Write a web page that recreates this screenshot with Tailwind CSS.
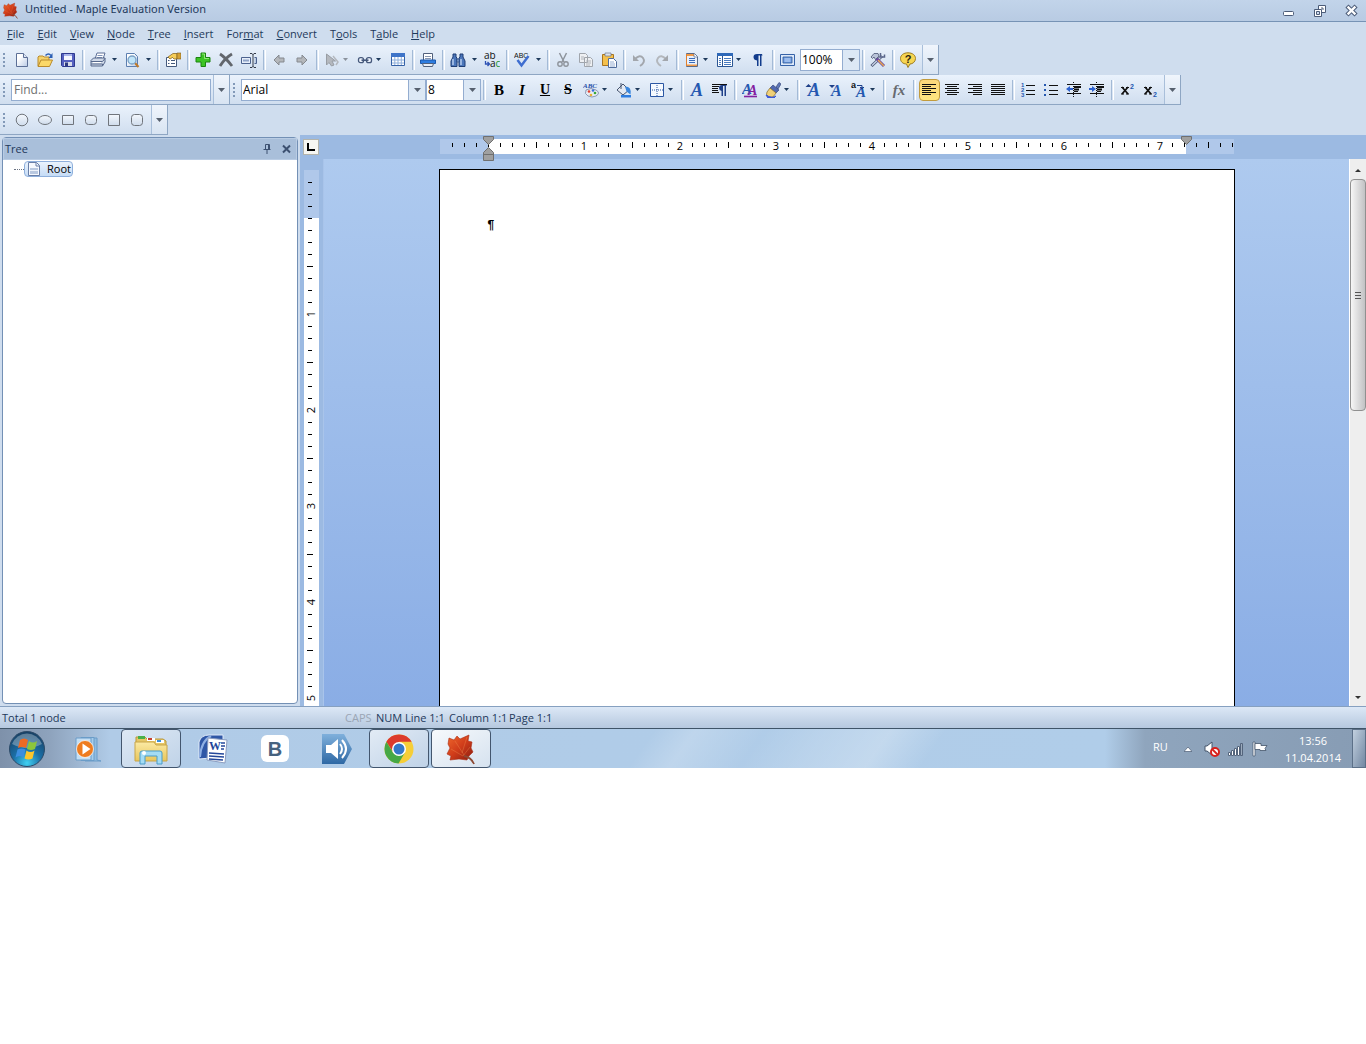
<!DOCTYPE html>
<html lang="en">

<head>
    <meta charset="utf-8">
    <title>Untitled - Maple Evaluation Version</title>
    <script src="https://cdn.jsdelivr.net/npm/@tailwindcss/browser@4"></script>
</head>

<body class="bg-white font-['Open_Sans',sans-serif] text-[11px] leading-4 text-[#1e395b]">
    <!-- gradients need a rendered svg, display:none would drop them -->
    <svg class="absolute size-0" aria-hidden="true">
        <defs>
            <linearGradient id="g-leaf" x1="0" y1="0" x2="1" y2="1"><stop offset="0" stop-color="#f0682c"/><stop offset=".5" stop-color="#d03c1a"/><stop offset="1" stop-color="#8c1c10"/></linearGradient>
            <linearGradient id="g-paper" x1="0" y1="0" x2="1" y2="1"><stop offset=".3" stop-color="#fff"/><stop offset="1" stop-color="#b9cae6"/></linearGradient>
            <linearGradient id="g-shape" x1="0" y1="0" x2="0" y2="1"><stop offset="0" stop-color="#f4f8fd"/><stop offset="1" stop-color="#cfdcec"/></linearGradient>
            <radialGradient id="g-orb" cx=".5" cy=".9" r=".9"><stop offset="0" stop-color="#3fd0f2"/><stop offset=".45" stop-color="#1b6fa6"/><stop offset="1" stop-color="#173f63"/></radialGradient>
            <linearGradient id="g-blue" x1="0" y1="0" x2="0" y2="1"><stop offset="0" stop-color="#7fb0dc"/><stop offset="1" stop-color="#2e68a4"/></linearGradient>
            <linearGradient id="g-folder" x1="0" y1="0" x2="0" y2="1"><stop offset="0" stop-color="#fbeaa4"/><stop offset="1" stop-color="#e8c65c"/></linearGradient>
        </defs>
    </svg>
    <!-- icon set -->
    <svg class="hidden" aria-hidden="true">
        <symbol id="i-leaf" viewBox="0 0 32 32"><path d="M4 5l5 2 3-4 3 3 9-4-1 6 4 1-1 6 2 4-4 4-2 4-8-1-9 1 1-4-4-2 3-6-2-4z" fill="url(#g-leaf)" stroke="#a82c14" stroke-width=".6"/><path d="M10 8l9 14M22 4l-5 16M6 16l12 7M25 14l-7 9" stroke="#f79a58" stroke-width=".8" fill="none" opacity=".4"/><path d="M19 23q7 1 10 8" stroke="#8d4a34" stroke-width="1.800" fill="none"/></symbol>
        <symbol id="i-new" viewBox="0 0 16 16"><path d="M2.500 1.500h7l4 4v9h-11z" fill="url(#g-paper)" stroke="#5c6f96"/><path d="M9.500 1.500v4h4" fill="#dfe8f6" stroke="#5c6f96"/></symbol>
        <symbol id="i-open" viewBox="0 0 16 16"><path d="M1 14V5l1-1h4l1 1h5v3" fill="#f4d26a" stroke="#b98a2c"/><path d="M1 14.500L4 8h11.500l-3 6.500z" fill="#fbd868" stroke="#b98a2c"/><path d="M8.500 3.500q3-3 5.500 0" fill="none" stroke="#2b5fb4" stroke-width="1.500"/><path d="M15.500 1v5h-4z" fill="#2b5fb4"/></symbol>
        <symbol id="i-save" viewBox="0 0 16 16"><path d="M1.500 1.500h13v13h-12l-1-1z" fill="#5560c0" stroke="#2e3a90"/><path d="M4 2h8v6H4z" fill="#f5f7ff"/><path d="M4 2h8v2H4z" fill="#aab6ea"/><path d="M4 10h8v4H4z" fill="#d8dcea"/><path d="M5 10.500h3V14H5z" fill="#2e3a80"/></symbol>
        <symbol id="i-print" viewBox="0 0 16 16"><path d="M5 7l2-6h8l-2 6" fill="#fff" stroke="#5c6f96"/><path d="M7.500 3.500h5M7 5.500h5" stroke="#7f93b8"/><path d="M1 8.500L3.500 6H15v4l-2.500 4H1z" fill="#cfd9e8" stroke="#56688c"/><path d="M1 9.500h11.500L15 6.500M1 12h11.500v2" fill="none" stroke="#56688c"/><path d="M3 10.500h8" stroke="#fff"/></symbol>
        <symbol id="i-preview" viewBox="0 0 16 16"><path d="M2.500 1.500h8l3 3v10h-11z" fill="url(#g-paper)" stroke="#5c7fb0"/><path d="M11 11l3.500 4" stroke="#c07a28" stroke-width="2"/><circle cx="8" cy="8" r="4" fill="#bfe4f8" stroke="#7aa0c4" stroke-width="1.300"/></symbol>
        <symbol id="i-props" viewBox="0 0 16 16"><path d="M1.500 5.500h10v9h-10z" fill="#fff" stroke="#44597c"/><path d="M3 8.500h1.500M6 8.500h4M3 11.500h1.500M6 11.500h4" stroke="#44597c"/><path d="M3 5l5-3.500h4V7H9L7.500 5.500 5 7z" fill="#f6cd58" stroke="#8a6a28" stroke-width=".8"/><path d="M12 1h4v6h-4z" fill="#d6a234" stroke="#7a5a20" stroke-width=".6"/></symbol>
        <symbol id="i-plus" viewBox="0 0 16 16"><path d="M6 1h4.500v4.500H15V10h-4.500v4.500H6V10H1V5.500h5z" fill="#3cc424" stroke="#1b8410"/><path d="M7 2h2.500v4.500H14" fill="none" stroke="#a6f08c" stroke-width=".8"/></symbol>
        <symbol id="i-x" viewBox="0 0 16 16"><path d="M2 2q6 4 12 12M14 2Q7 6 2 14" stroke="#62666c" stroke-width="2.800" fill="none"/></symbol>
        <symbol id="i-rename" viewBox="0 0 16 16"><path d="M.5 5.500h9v6h-9z" fill="#e6eefa" stroke="#4c628e"/><path d="M2 8.500h6" stroke="#90a4c8" stroke-width="2"/><path d="M9 1.500h2l1 1 1-1h2M9 15.500h2l1-1 1 1h2M12 2v13" fill="none" stroke="#333a48"/><path d="M13.500 5.500h2v6h-2" fill="#b8c8e0" stroke="#4c628e"/></symbol>
        <symbol id="i-left" viewBox="0 0 16 16"><path d="M8 3v3h5v4H8v3L3 8z" fill="#b4b7bb" stroke="#85898f"/></symbol>
        <symbol id="i-right" viewBox="0 0 16 16"><path d="M8 3v3H3v4h5v3l5-5z" fill="#b4b7bb" stroke="#85898f"/></symbol>
        <symbol id="i-cursor" viewBox="0 0 16 16"><path d="M2.500 2v11l2.500-2.500L7.500 14 10 13 8 9h3.500z" fill="#b4b8be" stroke="#989da4"/><path d="M9 4l5 6-2 3" fill="none" stroke="#b4b8be" stroke-width="1.500"/></symbol>
        <symbol id="i-link" viewBox="0 0 16 16"><rect x="1.500" y="5.700" width="5" height="5" rx="2" fill="#eef4fc" stroke="#46597c" stroke-width="1.300"/><rect x="9.500" y="5.700" width="5" height="5" rx="2" fill="#eef4fc" stroke="#46597c" stroke-width="1.300"/><path d="M4.500 8.200h7" stroke="#46597c" stroke-width="1.600"/></symbol>
        <symbol id="i-table" viewBox="0 0 16 16"><path d="M1.500 1.500h13v12h-13z" fill="#fff" stroke="#3562a8"/><path d="M1 1h14v4H1z" fill="#3e74c8"/><path d="M2 8h12M2 11h12M4.800 5v8M8 5v8M11.300 5v8" stroke="#8fb0dc"/></symbol>
        <symbol id="i-print2" viewBox="0 0 16 16"><path d="M3.500 8V1.500h9V8" fill="#fff" stroke="#50607c"/><path d="M5 4.500h6M5 6.500h6" stroke="#8896b0"/><path d="M.5 8h15v3.500H.5z" fill="#2e7de0" stroke="#1c58ac"/><path d="M2.500 11.500h11l-1 3h-9z" fill="#e9eef6" stroke="#50607c"/></symbol>
        <symbol id="i-binoc" viewBox="0 0 16 16"><path d="M3 2h3v3l1 1v8.500H1V9l2-4zM13 2h-3v3L9 6v8.500h6V9l-2-4z" fill="#4b76ba" stroke="#1f3d74"/><path d="M7 7h2v3H7z" fill="#8eaedc" stroke="#1f3d74" stroke-width=".6"/><path d="M3 7v6M11 7v6" stroke="#c4d8f4" stroke-width="1.300"/></symbol>
        <symbol id="i-replace" viewBox="0 0 16 16"><g font-family="Open Sans" font-size="10"><text x="0" y="7" fill="#111">ab</text><text x="6" y="15" fill="#111">a<tspan fill="#18922c">c</tspan></text></g><path d="M1.500 9v3h4M3.500 10l2 2-2 2" fill="none" stroke="#2c50b4" stroke-width="1.300"/></symbol>
        <symbol id="i-spell" viewBox="0 0 16 16"><text x="0" y="6" font-family="Liberation Sans" font-size="7" fill="#111">ABC</text><path d="M3.500 8l4 5.500L14.500 4" fill="none" stroke="#3f6ed0" stroke-width="2.500"/></symbol>
        <symbol id="i-cut" viewBox="0 0 16 16"><path d="M4.500 1l4.500 9M11.500 1L7 10" stroke="#8e949c" stroke-width="1.500"/><circle cx="5" cy="12" r="2.200" fill="none" stroke="#8e949c" stroke-width="1.400"/><circle cx="11" cy="12" r="2.200" fill="none" stroke="#8e949c" stroke-width="1.400"/></symbol>
        <symbol id="i-copy" viewBox="0 0 16 16"><path d="M1.500 1.500h6l2 2v7h-8zM6.500 5.500h6l2 2v7h-8z" fill="#eef0f3" stroke="#a0a5ac"/><path d="M3 5h3M3 7h3M8 9h5M8 11h5M8 13h4" stroke="#b0b4ba"/></symbol>
        <symbol id="i-paste" viewBox="0 0 16 16"><path d="M1.500 2.500h11v11h-11z" fill="#f4c04c" stroke="#a87420"/><path d="M4 1h6v3H4z" fill="#dfe4ec" stroke="#6c7890" stroke-width=".7"/><path d="M7.500 6.500h5l3 3v6h-8z" fill="#fff" stroke="#506c9c"/><path d="M9 10h4M9 12h5M9 14h5" stroke="#7b9ac8" stroke-width=".8"/></symbol>
        <symbol id="i-undo" viewBox="0 0 16 16"><path d="M4 7q5-5 8-1t-3 8" fill="none" stroke="#a3a7ad" stroke-width="2"/><path d="M2 3v6h6z" fill="#a3a7ad"/></symbol>
        <symbol id="i-redo" viewBox="0 0 16 16"><path d="M12 7Q7 2 4 6t3 8" fill="none" stroke="#b3b7bc" stroke-width="2"/><path d="M14 3v6H8z" fill="#a3a7ad"/></symbol>
        <symbol id="i-doc" viewBox="0 0 16 16"><path d="M2.500 1.500h8l3 3v10h-11z" fill="#e8f0fc" stroke="#5a6a88"/><path d="M3 2h7v2H3zM3 12.500h10V14H3z" fill="#f09a48"/><path d="M2.500 2v12" stroke="#e08030"/><path d="M5 6.500h6M5 8.500h6M5 10.500h6" stroke="#3c6cb8"/><path d="M10 1.500v3.500h3.500" fill="#fff" stroke="#5a6a88" stroke-width=".7"/></symbol>
        <symbol id="i-cols" viewBox="0 0 16 16"><path d="M.5 1.500h15v13H.5z" fill="#fff" stroke="#2b5694"/><path d="M0 1h16v3H0z" fill="#2f69b8"/><path d="M5.500 4v10" stroke="#2b5694"/><path d="M2 6.500h2M2 8.500h2M2 10.500h2M2 12.500h2M7 6.500h7M7 8.500h7M7 10.500h7M7 12.500h7" stroke="#4a7cc0"/></symbol>
        <symbol id="i-pil" viewBox="0 0 16 16"><path d="M12 2H7Q3.500 2 3.500 5T7 8.500v5.500h1.500V3.500h1.500V14h1.500V3.500h1z" fill="#123c8c"/></symbol>
        <symbol id="i-fit" viewBox="0 0 16 16"><path d="M.5 2.500h14v11H.5z" fill="#dbe8fa" stroke="#3562a8"/><path d="M3 5h9v6H3z" fill="#6c9ae0" stroke="#2b5694" stroke-width=".8"/><path d="M4.500 7h6M4.500 9h6" stroke="#c8dcf8"/></symbol>
        <symbol id="i-tools" viewBox="0 0 16 16"><path d="M1.500 14L12 4" stroke="#4a5674" stroke-width="3"/><path d="M2 13.500L12 4" stroke="#cad4e8" stroke-width="1.300"/><path d="M10.500 1v4h4V2.500" fill="none" stroke="#5a668a" stroke-width="1.500"/><path d="M6 6l8 8" stroke="#6a48a0" stroke-width="3"/><path d="M8 8l6 6" stroke="#e8a850" stroke-width="1.500"/><path d="M1 5l3-3.500h4L9 4 5.500 7.500 4 5 2.500 6.500z" fill="#b9c3d8" stroke="#4a5674" stroke-width=".8"/></symbol>
        <symbol id="i-help" viewBox="0 0 16 16"><path d="M8 .8c4.500 0 7.500 2.400 7.500 5.700S12.500 12 10 12l-2 3.500L6.500 12C3 12 .5 9.800.5 6.500S3.500.8 8 .8z" fill="#f6d552" stroke="#9c7c24"/><text x="8" y="10.500" text-anchor="middle" font-family="Liberation Sans" font-weight="bold" font-size="11" fill="#2a2410">?</text></symbol>
        <symbol id="i-abc" viewBox="0 0 16 16"><text x="0" y="6" font-family="Liberation Serif" font-weight="bold" font-style="italic" font-size="7" fill="#2750a8">ABC</text><path d="M3 8q5-3 10 0t0 6q-4 2-8 0t-2-6z" fill="#e8ecf4" stroke="#7484a4" stroke-width=".8"/><circle cx="6" cy="9.500" r="1.300" fill="#e04030"/><circle cx="10" cy="8.500" r="1.300" fill="#3a70d8"/><circle cx="12" cy="11" r="1.300" fill="#38a838"/><circle cx="8" cy="13" r="1.300" fill="#e8b030"/></symbol>
        <symbol id="i-fill" viewBox="0 0 16 16"><path d="M1 8l6-6 6 6-6 5z" fill="#e4eaf4" stroke="#46546e"/><path d="M5 1v6" stroke="#46546e"/><path d="M9 4.500q7 0 5.500 8l-4-3z" fill="#3a86dc"/><path d="M5 13h10v2.500H5z" fill="#2e7de0"/></symbol>
        <symbol id="i-border" viewBox="0 0 16 16"><path d="M1.500 1.500h13v13h-13z" fill="#f6faff" stroke="#2b57a4"/><path d="M8 3v11M3 8h11" stroke="#2b57a4" stroke-dasharray="1 1"/></symbol>
        <symbol id="i-A" viewBox="0 0 16 16"><text x="2" y="14" font-family="Liberation Serif" font-style="italic" font-weight="bold" font-size="18" fill="#2558b0">A</text></symbol>
        <symbol id="i-para" viewBox="0 0 16 16"><path d="M0 2.500h15M0 4.500h7M0 6.500h6M0 8.500h6M0 10.500h7" stroke="#111"/><path d="M14.500 3H10q-3 0-3 2.800T9.500 9v5H11V4h1.500v10H14V4h.5z" fill="#1e3f88"/></symbol>
        <symbol id="i-AA" viewBox="0 0 16 16"><g font-family="Liberation Serif" font-style="italic" font-weight="bold"><text x="0" y="12" font-size="15" fill="#2558b0">A</text><text x="6" y="13" font-size="14" fill="#8420a0">A</text></g><path d="M2 14.500h13" stroke="#8420a0" stroke-width="1.600"/></symbol>
        <symbol id="i-brush" viewBox="0 0 16 16"><path d="M11 5l3-4.500 2 1.500L13 7z" fill="#6078b8" stroke="#36477c" stroke-width=".7"/><path d="M8 3l6 5-3 3-6-5z" fill="#5068b0" stroke="#36477c" stroke-width=".7"/><path d="M5 6l6 5-3 4H4q-4-2-2-5z" fill="#f0d078" stroke="#826828" stroke-width=".7"/><path d="M1 13q6 4 10 1l-2 2H3z" fill="#3a58d8" stroke="#3a58d8"/></symbol>
        <symbol id="i-grow" viewBox="0 0 16 16"><text x="3" y="14" font-family="Liberation Serif" font-style="italic" font-weight="bold" font-size="18" fill="#2558b0">A</text><path d="M.5 5h6L3.500 2z" fill="#1d3f88"/></symbol>
        <symbol id="i-shrink" viewBox="0 0 16 16"><text x="3" y="14" font-family="Liberation Serif" font-style="italic" font-weight="bold" font-size="16" fill="#2558b0">A</text><path d="M1 3h6L4 6z" fill="#1d3f88"/></symbol>
        <symbol id="i-case" viewBox="0 0 16 16"><text x="0" y="6" font-family="Liberation Sans" font-weight="bold" font-size="9" fill="#111">a</text><text x="5" y="15" font-family="Liberation Serif" font-style="italic" font-weight="bold" font-size="15" fill="#2558b0">A</text><path d="M6 3.500h5v3M9 5l2 2 2-2" fill="none" stroke="#1d3f88"/></symbol>
        <symbol id="i-al" viewBox="0 0 16 16"><path d="M1 2.500h14M1 4.500h9M1 6.500h14M1 8.500h9M1 10.500h14M1 12.500h9" stroke="#111"/></symbol>
        <symbol id="i-ac" viewBox="0 0 16 16"><path d="M1 2.500h14M3 4.500h10M1 6.500h14M3 8.500h10M1 10.500h14M3 12.500h10" stroke="#111"/></symbol>
        <symbol id="i-ar" viewBox="0 0 16 16"><path d="M1 2.500h14M6 4.500h9M1 6.500h14M6 8.500h9M1 10.500h14M6 12.500h9" stroke="#111"/></symbol>
        <symbol id="i-aj" viewBox="0 0 16 16"><path d="M1 2.500h14M1 4.500h14M1 6.500h14M1 8.500h14M1 10.500h14M1 12.500h14" stroke="#111"/></symbol>
        <symbol id="i-num" viewBox="0 0 16 16"><path d="M6 3.500h9M6 8.500h9M6 12.500h9" stroke="#111"/><g font-family="Liberation Sans" font-weight="bold" font-size="6" fill="#2558b0"><text x="1" y="5">1</text><text x="1" y="10">2</text><text x="1" y="15">3</text></g></symbol>
        <symbol id="i-bul" viewBox="0 0 16 16"><path d="M6 3.500h9M6 8.500h9M6 12.500h9" stroke="#111"/><path d="M1 2h2v2H1zM1 7h2v2H1zM1 12h2v2H1z" fill="#2558b0"/></symbol>
        <symbol id="i-out" viewBox="0 0 16 16"><path d="M1 2.500h14M8 9.500h4M1 11.500h14" stroke="#111"/><path d="M8 5h7M8 7.500h5" stroke="#111" stroke-width="2"/><path d="M7.500 0v15" stroke="#111" stroke-dasharray="1 1"/><path d="M0 7l4-3v2h3v2H4v2z" fill="#2e62d0"/></symbol>
        <symbol id="i-in" viewBox="0 0 16 16"><path d="M1 2.500h14M8 9.500h4M1 11.500h14" stroke="#111"/><path d="M8 5h7M8 7.500h5" stroke="#111" stroke-width="2"/><path d="M7.500 0v15" stroke="#111" stroke-dasharray="1 1"/><path d="M7 7L3 4v2H0v2h3v2z" fill="#2e62d0"/></symbol>
        <symbol id="i-sup" viewBox="0 0 16 16"><path d="M3 5l6 7M9 5l-6 7" stroke="#111" stroke-width="1.800"/><path d="M2 5.500h3M7 5.500h3M2 12h3M7 12h3" stroke="#111"/><text x="11" y="7" font-family="Liberation Sans" font-weight="bold" font-size="7" fill="#2558b0">2</text></symbol>
        <symbol id="i-sub" viewBox="0 0 16 16"><path d="M3 5l6 7M9 5l-6 7" stroke="#111" stroke-width="1.800"/><path d="M2 5.500h3M7 5.500h3M2 12h3M7 12h3" stroke="#111"/><text x="11" y="15" font-family="Liberation Sans" font-weight="bold" font-size="7" fill="#2558b0">2</text></symbol>
        <symbol id="i-circle" viewBox="0 0 16 16"><circle cx="8" cy="8" r="5.800" fill="url(#g-shape)" stroke="#70757c"/></symbol>
        <symbol id="i-ellipse" viewBox="0 0 16 16"><ellipse cx="8" cy="8" rx="6.500" ry="4.500" fill="url(#g-shape)" stroke="#70757c"/></symbol>
        <symbol id="i-rect" viewBox="0 0 16 16"><path d="M2.500 3.500h11v9h-11z" fill="url(#g-shape)" stroke="#70757c"/></symbol>
        <symbol id="i-rrect" viewBox="0 0 16 16"><rect x="2.500" y="3.500" width="11" height="9" rx="3" fill="url(#g-shape)" stroke="#70757c"/></symbol>
        <symbol id="i-square" viewBox="0 0 16 16"><path d="M2.500 2.500h11v11h-11z" fill="url(#g-shape)" stroke="#70757c"/></symbol>
        <symbol id="i-rsquare" viewBox="0 0 16 16"><rect x="2.500" y="2.500" width="11" height="11" rx="3" fill="url(#g-shape)" stroke="#70757c"/></symbol>
    </svg>

    <!-- application window -->
    <div class="bg-[#cfddee]">
        <header class="flex h-[22px] items-center border-b border-[#7793b5] bg-gradient-to-b from-[#c2d4ea] to-[#b8cbe3] pl-0.5 pr-[7px] font-['Noto_Sans',sans-serif]">
            <svg class="mr-1.5 size-[17px]"><use href="#i-leaf"/></svg>
            <h1 class="mb-1">Untitled - Maple Evaluation Version</h1>
            <div class="ml-auto flex items-center gap-[18px]">
                <button aria-label="Minimize"><svg class="block h-3.5 w-3.5" viewBox="0 0 14 14"><rect x="2.500" y="7.500" width="10" height="4" rx="1" fill="#fff" stroke="#4c5c78"/></svg></button>
                <button aria-label="Restore"><svg class="block h-3.5 w-3.5" viewBox="0 0 14 14"><path d="M5.500 1.500h7v7h-7z" fill="#fff" stroke="#4c5c78"/><path d="M8 4h2v2" fill="none" stroke="#4c5c78"/><path d="M1.500 5.500h7v7h-7z" fill="#fff" stroke="#4c5c78"/><path d="M3.500 7.500h3v3h-3z" fill="#cfdcf0" stroke="#4c5c78"/></svg></button>
                <button aria-label="Close"><svg class="block h-3.5 w-3.5" viewBox="0 0 14 14"><path d="M3.500 3.500l6 6M9.500 3.500l-6 6" stroke="#4c5c78" stroke-width="4.400" stroke-linecap="square"/><path d="M3.500 3.500l6 6M9.500 3.500l-6 6" stroke="#fff" stroke-width="2.400" stroke-linecap="square"/></svg></button>
            </div>
        </header>

        <nav class="flex h-[23px] items-center gap-[13px] pl-[7px]">
            <button><u>F</u>ile</button>
            <button><u>E</u>dit</button>
            <button><u>V</u>iew</button>
            <button><u>N</u>ode</button>
            <button><u>T</u>ree</button>
            <button><u>I</u>nsert</button>
            <button>For<u>m</u>at</button>
            <button><u>C</u>onvert</button>
            <button>T<u>o</u>ols</button>
            <button>T<u>a</u>ble</button>
            <button><u>H</u>elp</button>
        </nav>

        <div class="flex h-[30px]">
            <div data-bar="standard" class="flex items-center border-b border-r border-[#8ea6c3] bg-gradient-to-b from-[#eaf2fc] to-[#d0deef]"></div>
        </div>
        <div class="flex h-[30px]">
            <div data-bar="find" class="flex items-center border-b border-r border-[#8ea6c3] bg-gradient-to-b from-[#eaf2fc] to-[#d0deef]"></div>
            <div data-bar="format" class="flex items-center border-b border-r border-[#8ea6c3] bg-gradient-to-b from-[#eaf2fc] to-[#d0deef]"></div>
        </div>
        <div class="flex h-[30px]">
            <div data-bar="shapes" class="flex items-center border-b border-r border-[#8ea6c3] bg-gradient-to-b from-[#eaf2fc] to-[#d0deef]"></div>
        </div>

        <main class="flex">
            <div class="flex w-[300px] shrink-0 p-0.5">
                <section class="flex flex-1 flex-col rounded-sm border border-[#7390b5] bg-white">
                    <h2 class="flex h-[22px] items-center border border-[#b9cce4] bg-[#a9bfda] pl-px pr-[3px]">Tree
                        <button class="ml-auto mr-[7px]" aria-label="Pin"><svg class="block size-3" viewBox="0 0 12 12"><path d="M3.500 1.500h4v5h-4zM1.500 6.500h7M5 7v4M6.500 2v4" fill="none" stroke="#3c5070"/></svg></button>
                        <button aria-label="Close tree"><svg class="block size-3" viewBox="0 0 12 12"><path d="M2 2.500l7 7M9 2.500l-7 7" stroke="#3c5070" stroke-width="2"/></svg></button>
                    </h2>
                    <div class="mt-px flex items-center pl-[11px]">
                        <span class="w-2.5 border-t border-dotted border-gray-500"></span>
                        <button class="flex h-4 items-center gap-1.5 rounded-sm border border-[#8fb0dc] bg-gradient-to-b from-[#eaf3fd] to-[#c6dcf6] pl-0.5 pr-px text-black">
                            <svg class="size-3.5" viewBox="0 0 14 14"><path d="M1.500.5h8l3 3v10h-11z" fill="#f6f9fe" stroke="#6a7fa8"/><path d="M9 .5v3.500h3.500" fill="none" stroke="#6a7fa8"/><path d="M3 6h8v6H3z" fill="#b9c8e0"/><path d="M3 8.500h8" stroke="#eef3fa"/></svg>
                            Root
                        </button>
                    </div>
                </section>
            </div>

            <div class="grid flex-1 grid-cols-[24px_1fr_17px] grid-rows-[24px_1fr] bg-[#9cbae2]">
                <button class="mt-1 ml-[3px] size-4 border border-[#b4b4ac] bg-[#f6f6f2]" aria-label="Tab stop"><svg class="block size-3.5" viewBox="0 0 14 14"><path d="M4 3v7h7" fill="none" stroke="#000" stroke-width="2"/></svg></button>
                <div class="relative z-10 flex justify-center">
                    <svg id="hruler" class="block h-6 w-[796px] shrink-0 overflow-visible"></svg>
                </div>
                <div></div>

                <div class="border-r border-[#a9c4ea] pl-1 pt-[11px]">
                    <svg id="vruler" class="block h-[536px] w-[15px]"></svg>
                </div>
                <div class="flex justify-center bg-gradient-to-b from-[#aecaef] to-[#8aade5] pt-2.5">
                    <article class="min-h-[537px] w-[796px] border border-b-0 border-black bg-white px-12 pt-[47px] font-['Liberation_Sans'] text-[12px] font-bold text-black" contenteditable="true" spellcheck="false">¶</article>
                </div>
                <div class="flex flex-col border-l border-white bg-[#eeeeee] pt-0.5">
                    <svg class="h-[18px] w-4 shrink-0" viewBox="0 0 16 18"><path d="M5 11h6L8 8z" fill="#333"/></svg>
                    <div class="flex h-[232px] items-center justify-center rounded-sm border border-[#909090] bg-gradient-to-r from-[#f6f6f6] to-[#c2c2c4]">
                        <svg class="h-2 w-2" viewBox="0 0 8 8"><path d="M1 1.500h6M1 4.500h6M1 7.500h6" stroke="#555"/></svg>
                    </div>
                    <svg class="mt-auto h-[18px] w-4 shrink-0" viewBox="0 0 16 18"><path d="M5 8h6l-3 3z" fill="#333"/></svg>
                </div>
            </div>
        </main>

        <footer class="flex h-[22px] items-center border-t border-[#86a0c0] bg-gradient-to-b from-[#dce8f6] to-[#b6c8df] pl-0.5">
            <span class="w-[343px]">Total 1 node</span>
            <span class="w-[31px] text-[#9aa5b4]">CAPS</span>
            <span class="w-[29px]">NUM</span>
            <span class="w-11">Line 1:1</span>
            <span class="w-[60px]">Column 1:1</span>
            <span>Page 1:1</span>
        </footer>
    </div>

    <!-- taskbar -->
    <div class="flex h-10 items-stretch border-t border-[#3f5468] bg-[linear-gradient(125deg,transparent_47%,#ffffff30_50%,transparent_55%,#ffffff20_59%,#ffffff40_64%,transparent_68%),linear-gradient(90deg,#7e91aa_0,#8ea3bd_50px,#b0cbe7_110px,#b0cde9_1105px,#8fa5bd_1145px,#879cb4_100%)]">
        <button class="flex w-[57px] items-center justify-center pr-1" aria-label="Start">
            <svg class="size-[38px]" viewBox="0 0 38 38"><circle cx="19" cy="19" r="17.500" fill="url(#g-orb)" stroke="#2c4a68"/><path d="M4 14a16 16 0 0 1 30 0q-15 8-30 0z" fill="#fff" opacity=".3"/><path d="M12 10q4-3 8 0l-2 8q-4-2-8 0z" fill="#ee6a24"/><path d="M21 11q4 3 8 0l-2 8q-4 2-8 0z" fill="#8cc63c"/><path d="M9.500 19.500q4-2 8 0l-2 8q-4-3-8 0z" fill="#3c8ee0"/><path d="M18.500 20.500q4 3 8 0l-2 8q-4 2-8 0z" fill="#fcc62c"/></svg>
        </button>
        <div class="flex gap-0.5 pl-0.5">
            <button class="flex w-[60px] items-center justify-center" aria-label="Media Player">
                <svg class="size-8" viewBox="0 0 32 32"><path d="M12 5h12v22l4 1H12z" fill="#8fbbe0" stroke="#6a9cc8"/><path d="M8 4.500h13v23H8z" fill="#a6cdec" stroke="#6a9cc8"/><path d="M3 5h15v22H3z" fill="#c4dff4" stroke="#6a9cc8"/><circle cx="12" cy="16" r="8.500" fill="#ee7c20" stroke="#fff" stroke-width=".7"/><path d="M9.500 10.500l8 5.500-8 5.500z" fill="#fff"/></svg>
            </button>
            <button class="flex w-[60px] items-center justify-center rounded-sm border border-[#43566e] bg-gradient-to-br from-[#dde8f4] to-[#c0d3e8]" aria-label="Explorer">
                <svg class="h-8 w-9" viewBox="0 0 36 32"><path d="M3 4h9l2 2h16l3 2v18H3z" fill="#e6c766" stroke="#b9983c"/><path d="M5 3h7v3H5z" fill="#48b048"/><path d="M14 5h8v3h-8z" fill="#fff"/><path d="M15 5h4v2h-4z" fill="#c84030"/><path d="M23 7h8v3h-8z" fill="#fff"/><path d="M24 7h4v2h-4z" fill="#3a90d8"/><path d="M2 9h19l2 3h11v16H2z" fill="url(#g-folder)" stroke="#c8a548"/><path d="M7 31V20q0-2 2-2h18q2 0 2 2v11h-5v-8H12v8z" fill="#a4dcf4" stroke="#4a9cc8"/><circle cx="11" cy="20" r="2" fill="#fff"/></svg>
            </button>
            <button class="flex w-[60px] items-center justify-center" aria-label="Word">
                <svg class="size-8" viewBox="0 0 32 32"><path d="M2 26V9Q4 2 12 2h14v22z" fill="#2f57a6" stroke="#dfe9f8"/><path d="M3 24Q4 8 14 3" stroke="#8fb0e4" stroke-width="2" fill="none"/><path d="M11 5l19 2-2 23-18-3z" fill="#fff" stroke="#8a9cc0"/><text x="12" y="17" font-family="Liberation Serif" font-size="12" font-weight="bold" fill="#24479a">W</text><path d="M24 10h4M24 13h4M24 16h3M12 20l15 1M12 23l15 1M12 26l14 1" stroke="#24479a" stroke-width="1.500"/></svg>
            </button>
            <button class="flex w-[60px] items-center justify-center" aria-label="VK">
                <span class="flex h-[27px] w-7 items-center justify-center rounded-md bg-white font-['Liberation_Sans'] text-[20px] font-bold text-[#46627f]">B</span>
            </button>
            <button class="flex w-[60px] items-center justify-center" aria-label="Sound">
                <svg class="size-8" viewBox="0 0 32 32"><path d="M1 1h22l8 15-8 15H1z" fill="url(#g-blue)"/><path d="M5 12h5l7-6v20l-7-6H5z" fill="#fff"/><path d="M19 11q4 5 0 10M21 7q8 9 0 18" fill="none" stroke="#fff" stroke-width="2"/></svg>
            </button>
            <button class="flex w-[60px] items-center justify-center rounded-sm border border-[#43566e] bg-gradient-to-br from-[#e2ebf5] to-[#bfd2e7]" aria-label="Chrome">
                <svg class="size-[30px]" viewBox="0 0 30 30"><circle cx="15" cy="15" r="14.500" fill="#f6ce38"/><path d="M2.400 7.800A14.500 14.500 0 0 1 27.600 7.800H15L9 18z" fill="#dc3a2c"/><path d="M2.400 7.800A14.500 14.500 0 0 0 14.500 29.500L21 18.500 9 18.500z" fill="#46a846"/><circle cx="15" cy="15" r="7" fill="#fff"/><circle cx="15" cy="15" r="5.500" fill="#3478c8"/></svg>
            </button>
            <button class="flex w-[60px] items-center justify-center rounded-sm border border-[#43566e] bg-gradient-to-br from-[#f6f9fc] to-[#d6e2ef]" aria-label="Maple">
                <svg class="size-8"><use href="#i-leaf"/></svg>
            </button>
        </div>
        <div class="ml-auto flex items-center text-white">
            <span class="mb-1 mr-4">RU</span>
            <svg class="mr-3 h-2 w-2" viewBox="0 0 8 8"><path d="M0 6.500h8L4 2z" fill="#fff" stroke="#4a5c74" stroke-width=".7"/></svg>
            <svg class="mr-2 size-4" viewBox="0 0 16 16"><path d="M1 5h2l5-4v13l-5-4H1z" fill="#fff" stroke="#44546a"/><circle cx="11" cy="11" r="4" fill="#fff" stroke="#d8201c" stroke-width="2"/><path d="M8 8l6 6" stroke="#d8201c" stroke-width="1.800"/></svg>
            <svg class="mr-2 size-4" viewBox="0 0 16 16"><path d="M.5 11.500h2v3h-2zM3.500 9.500h2v5h-2zM6.500 7.500h2v7h-2zM9.500 5.500h2v9h-2z" fill="#fff" stroke="#54657c"/><path d="M12.500 2.500h2v12h-2z" fill="#9cabbd" stroke="#54657c"/></svg>
            <svg class="mr-[17px] size-4" viewBox="0 0 16 16"><path d="M1 1h2v14H1z" fill="#fff" stroke="#44546a" stroke-width=".7"/><path d="M3 2.500h6v2h6l-2 3 1 2H8v-1H3z" fill="#fff" stroke="#44546a" stroke-width=".8"/></svg>
            <time class="mr-[11px] text-center leading-[17px]">13:56<br>11.04.2014</time>
            <button class="h-full w-3.5 border border-[#5c7088] bg-gradient-to-br from-[#c2d0df] to-[#7388a2]" aria-label="Show desktop"></button>
        </div>
    </div>

    <script>
        const icon = (name) => `<svg class="block size-4 shrink-0"><use href="#i-${name}"/></svg>`;
        const arrow = (fill) => `<svg class="block h-[3px] w-[5px]" viewBox="0 0 5 3"><path d="M0 0h5L2.500 3z" fill="${fill}"/></svg>`;
        const bigArrow = `<svg class="block h-1 w-[7px]" viewBox="0 0 7 4"><path d="M0 0h7L3.500 4z" fill="#56606e"/></svg>`;
        const glyphs = {
            B: `<b class="w-4 text-center font-['Liberation_Serif'] text-[15px] text-black">B</b>`,
            I: `<b class="w-4 text-center font-['Liberation_Serif'] text-[15px] italic text-black">I</b>`,
            U: `<b class="w-4 text-center font-['Liberation_Serif'] text-[14px] text-black underline">U</b>`,
            S: `<b class="w-4 text-center font-['Liberation_Serif'] text-[14px] text-black line-through">S</b>`,
            fx: `<i class="w-4 text-center font-['Liberation_Serif'] text-[15px] font-bold text-[#666a70]">fx</i>`
        };
        const face = (name) => glyphs[name] || icon(name);

        const parts = {
            grip: () => `<span class="ml-[3px] mr-1.5 flex flex-col gap-0.5"><i class="size-0.5 bg-[#8299b8]"></i><i class="size-0.5 bg-[#8299b8]"></i><i class="size-0.5 bg-[#8299b8]"></i><i class="size-0.5 bg-[#8299b8]"></i></span>`,
            sep: () => `<span class="mx-[2px] h-5 w-[3px] border-l border-r border-l-[#a3bad6] border-r-white"></span>`,
            btn: (name) => `<button class="flex h-[22px] w-[23px] items-center pl-[3px]" aria-label="${name}">${face(name)}</button>`,
            on: (name) => `<button class="flex h-[22px] w-[23px] items-center pl-px" aria-label="${name}" aria-pressed="true"><span class="flex h-[22px] w-[21px] items-center rounded-sm border border-[#c29b3c] bg-gradient-to-b from-[#fbd87c] to-[#ffe680] pl-px">${face(name)}</span></button>`,
            // wide: arrow sits apart from the icon, drop: arrow hugs it
            wide: (name) => `<button class="flex h-[22px] w-[34px] items-center gap-1.5 pl-[3px]" aria-label="${name}">${face(name)}${arrow('#1e395b')}</button>`,
            drop: (name) => `<button class="flex h-[22px] w-[33px] items-center gap-[3px] pl-[3px]" aria-label="${name}">${face(name)}${arrow('#1e395b')}</button>`,
            dim: (name) => `<button class="flex h-[22px] w-[33px] items-center gap-[3px] pl-[3px]" aria-label="${name}" disabled>${face(name)}${arrow('#8a929c')}</button>`,
            find: () => `<input type="text" placeholder="Find..." aria-label="Find" class="h-[22px] w-[200px] border border-[#94add0] bg-white px-0.5 text-[12px] outline-none placeholder:text-[#707070]">`,
            font: () => combo('Font', 'Arial', 'w-[185px]'),
            size: () => combo('Font size', '8', 'w-[55px]'),
            zoom: () => combo('Zoom', '100%', 'w-[60px]'),
            more: () => `<button class="ml-[2px] flex h-[29px] w-4 items-center justify-center border-l border-[#a9bfda] bg-gradient-to-b from-[#f0f5fc] to-[#d8e4f2]" aria-label="Toolbar options">${bigArrow}</button>`
        };

        function combo(label, value, width) {
            return `<span class="relative flex h-[22px] ${width} border border-[#94add0] bg-white">
                <select aria-label="${label}" class="w-full appearance-none bg-transparent pl-px text-[12px] leading-5 text-black outline-none"><option>${value}</option></select>
                <span class="pointer-events-none absolute inset-y-0 right-0 flex w-[17px] items-center justify-center border-l border-[#94add0] bg-[#dce8f5]">${bigArrow}</span>
            </span>`;
        }

        const bars = {
            standard: 'grip btn:new btn:open btn:save sep wide:print wide:preview sep btn:props sep btn:plus btn:x btn:rename sep btn:left btn:right sep dim:cursor drop:link btn:table sep btn:print2 sep wide:binoc btn:replace sep wide:spell sep btn:cut btn:copy btn:paste sep btn:undo btn:redo sep drop:doc drop:cols btn:pil sep btn:fit zoom sep btn:tools sep btn:help more',
            find: 'grip find more',
            format: 'grip font size sep btn:B btn:I btn:U btn:S drop:abc drop:fill drop:border sep btn:A btn:para sep btn:AA drop:brush sep btn:grow btn:shrink drop:case sep btn:fx sep on:al btn:ac btn:ar btn:aj sep btn:num btn:bul btn:out btn:in sep btn:sup btn:sub more',
            shapes: 'grip btn:circle btn:ellipse btn:rect btn:rrect btn:square btn:rsquare more'
        };
        for (const bar of document.querySelectorAll('[data-bar]')) {
            bar.innerHTML = bars[bar.dataset.bar].split(' ').map((item) => {
                const [part, name] = item.split(':');
                return parts[part](name);
            }).join('');
        }

        // rulers: 96px to the inch, a tick every 1/8 inch
        let h = '<rect x="1" y="4" width="794" height="15" fill="#b0c8ea"/><rect x="49" y="4" width="698" height="15" fill="#fff"/>';
        for (let i = -3; i <= 62; i++) {
            const x = 49 + i * 12;
            if (i > 0 && i % 8 === 0 && i < 58) {
                h += `<text x="${x}" y="15" text-anchor="middle" font-size="11" fill="#000">${i / 8}</text>`;
            } else {
                const long = i % 4 === 0 && i !== 0;
                h += `<rect x="${x}" y="${long ? 7 : 8}" width="1" height="${long ? 6 : 4}" fill="#000"/>`;
            }
        }
        h += '<g fill="#a0a0a0" stroke="#707070"><path d="M44.500 1.500h10v3l-5 5-5-5z"/><path d="M49.500 12.500l5 5v8h-10v-8zM44.500 19.500h10"/><path d="M742.500 1.500h10v3l-5 5-5-5z"/></g>';
        document.getElementById('hruler').innerHTML = h;

        let v = '<rect width="15" height="48" fill="#b0c8ea"/><rect y="48" width="15" height="488" fill="#fff"/>';
        for (let i = -3; i <= 40; i++) {
            const y = 48 + i * 12;
            if (i > 0 && i % 8 === 0) {
                v += `<text transform="translate(11 ${y}) rotate(-90)" text-anchor="middle" font-size="11" fill="#000">${i / 8}</text>`;
            } else {
                const long = i % 4 === 0 && i !== 0;
                v += `<rect x="${long ? 3 : 4}" y="${y}" width="${long ? 6 : 4}" height="1" fill="#000"/>`;
            }
        }
        document.getElementById('vruler').innerHTML = v;
    </script>
</body>

</html>
